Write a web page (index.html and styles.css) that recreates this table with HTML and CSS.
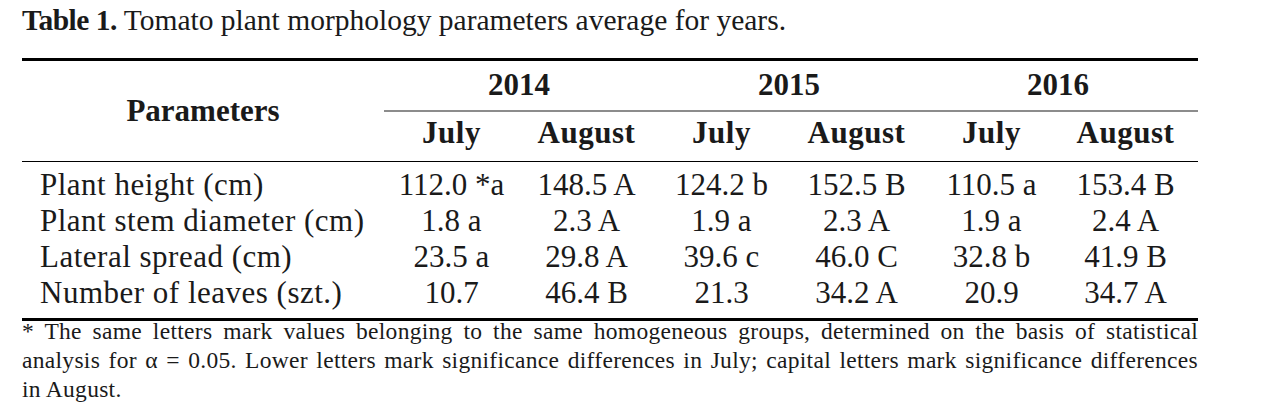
FILE: index.html
```html
<!DOCTYPE html>
<html lang="en">
<head>
<meta charset="utf-8">
<title>Table 1</title>
<link rel="stylesheet" href="styles.css">
</head>
<body>
<div class="page">
  <p class="caption"><b>Table 1.</b> Tomato plant morphology parameters average for years.</p>
  <table class="data">
    <colgroup>
      <col class="c-param">
      <col class="c-val"><col class="c-val"><col class="c-val"><col class="c-val"><col class="c-val">
      <col class="c-last">
    </colgroup>
    <thead>
      <tr class="years">
        <th class="param" rowspan="2">Parameters</th>
        <th class="year" colspan="2">2014</th>
        <th class="year" colspan="2">2015</th>
        <th class="year last" colspan="2">2016</th>
      </tr>
      <tr class="months">
        <th>July</th><th>August</th>
        <th>July</th><th>August</th>
        <th>July</th><th class="last">August</th>
      </tr>
    </thead>
    <tbody>
      <tr class="first">
        <td class="label">Plant height (cm)</td>
        <td>112.0 *a</td><td>148.5 A</td><td>124.2 b</td><td>152.5 B</td><td>110.5 a</td><td class="last">153.4 B</td>
      </tr>
      <tr>
        <td class="label">Plant stem diameter (cm)</td>
        <td>1.8 a</td><td>2.3 A</td><td>1.9 a</td><td>2.3 A</td><td>1.9 a</td><td class="last">2.4 A</td>
      </tr>
      <tr>
        <td class="label">Lateral spread (cm)</td>
        <td>23.5 a</td><td>29.8 A</td><td>39.6 c</td><td>46.0 C</td><td>32.8 b</td><td class="last">41.9 B</td>
      </tr>
      <tr class="final">
        <td class="label">Number of leaves (szt.)</td>
        <td>10.7</td><td>46.4 B</td><td>21.3</td><td>34.2 A</td><td>20.9</td><td class="last">34.7 A</td>
      </tr>
    </tbody>
  </table>
  <div class="note">
    <span class="line">* The same letters mark values belonging to the same homogeneous groups, determined on the basis of statistical</span>
    <span class="line">analysis for α = 0.05. Lower letters mark significance differences in July; capital letters mark significance differences</span>
    <span class="line end">in August.</span>
  </div>
</div>
</body>
</html>
```
FILE: styles.css
```css
html, body {
  margin: 0;
  padding: 0;
  background: #ffffff;
}

.page {
  width: 1176px;
  padding-left: 22px;
  color: #1a1a1a;
  font-family: "Liberation Serif", "Times New Roman", serif;
}

.caption {
  margin: 2px 0 20px 0;
  font-size: 29.5px;
  line-height: 36px;
  white-space: nowrap;
}

.caption b {
  font-weight: 700;
  letter-spacing: -0.5px;
}

.data {
  width: 1176px;
  table-layout: fixed;
  border-collapse: separate;
  border-spacing: 0;
  border-top: 3px solid #000;
  border-bottom: 3px solid #000;
  font-size: 31px;
}

.c-param { width: 362px; }
.c-val { width: 135px; }
.c-last { width: 139px; }

.data th,
.data td {
  padding: 0;
  text-align: center;
  white-space: nowrap;
}

.data th {
  font-weight: 700;
}

.data .last {
  padding-right: 6px;
}

.years th.year {
  line-height: 47px;
  padding-bottom: 2px;
  border-bottom: 2px solid #8c8c8c;
}

.param {
  vertical-align: middle;
  line-height: 36px;
  border-bottom: 1px solid #000;
}

.months th {
  line-height: 41px;
  padding-bottom: 8px;
  border-bottom: 1px solid #000;
  letter-spacing: 0.5px;
}

.data td {
  line-height: 36px;
}

.data td.label {
  text-align: left;
  padding-left: 18px;
  letter-spacing: 0.5px;
}

.data tr.first td {
  padding-top: 5px;
}

.data tr.final td {
  padding-bottom: 7px;
}

.note {
  margin-top: -4px;
  font-size: 23.5px;
  line-height: 29px;
  letter-spacing: 0.3px;
}

.note .line {
  display: block;
  text-align: justify;
  text-align-last: justify;
  white-space: nowrap;
}

.note .line.end {
  text-align: left;
  text-align-last: left;
}
```
